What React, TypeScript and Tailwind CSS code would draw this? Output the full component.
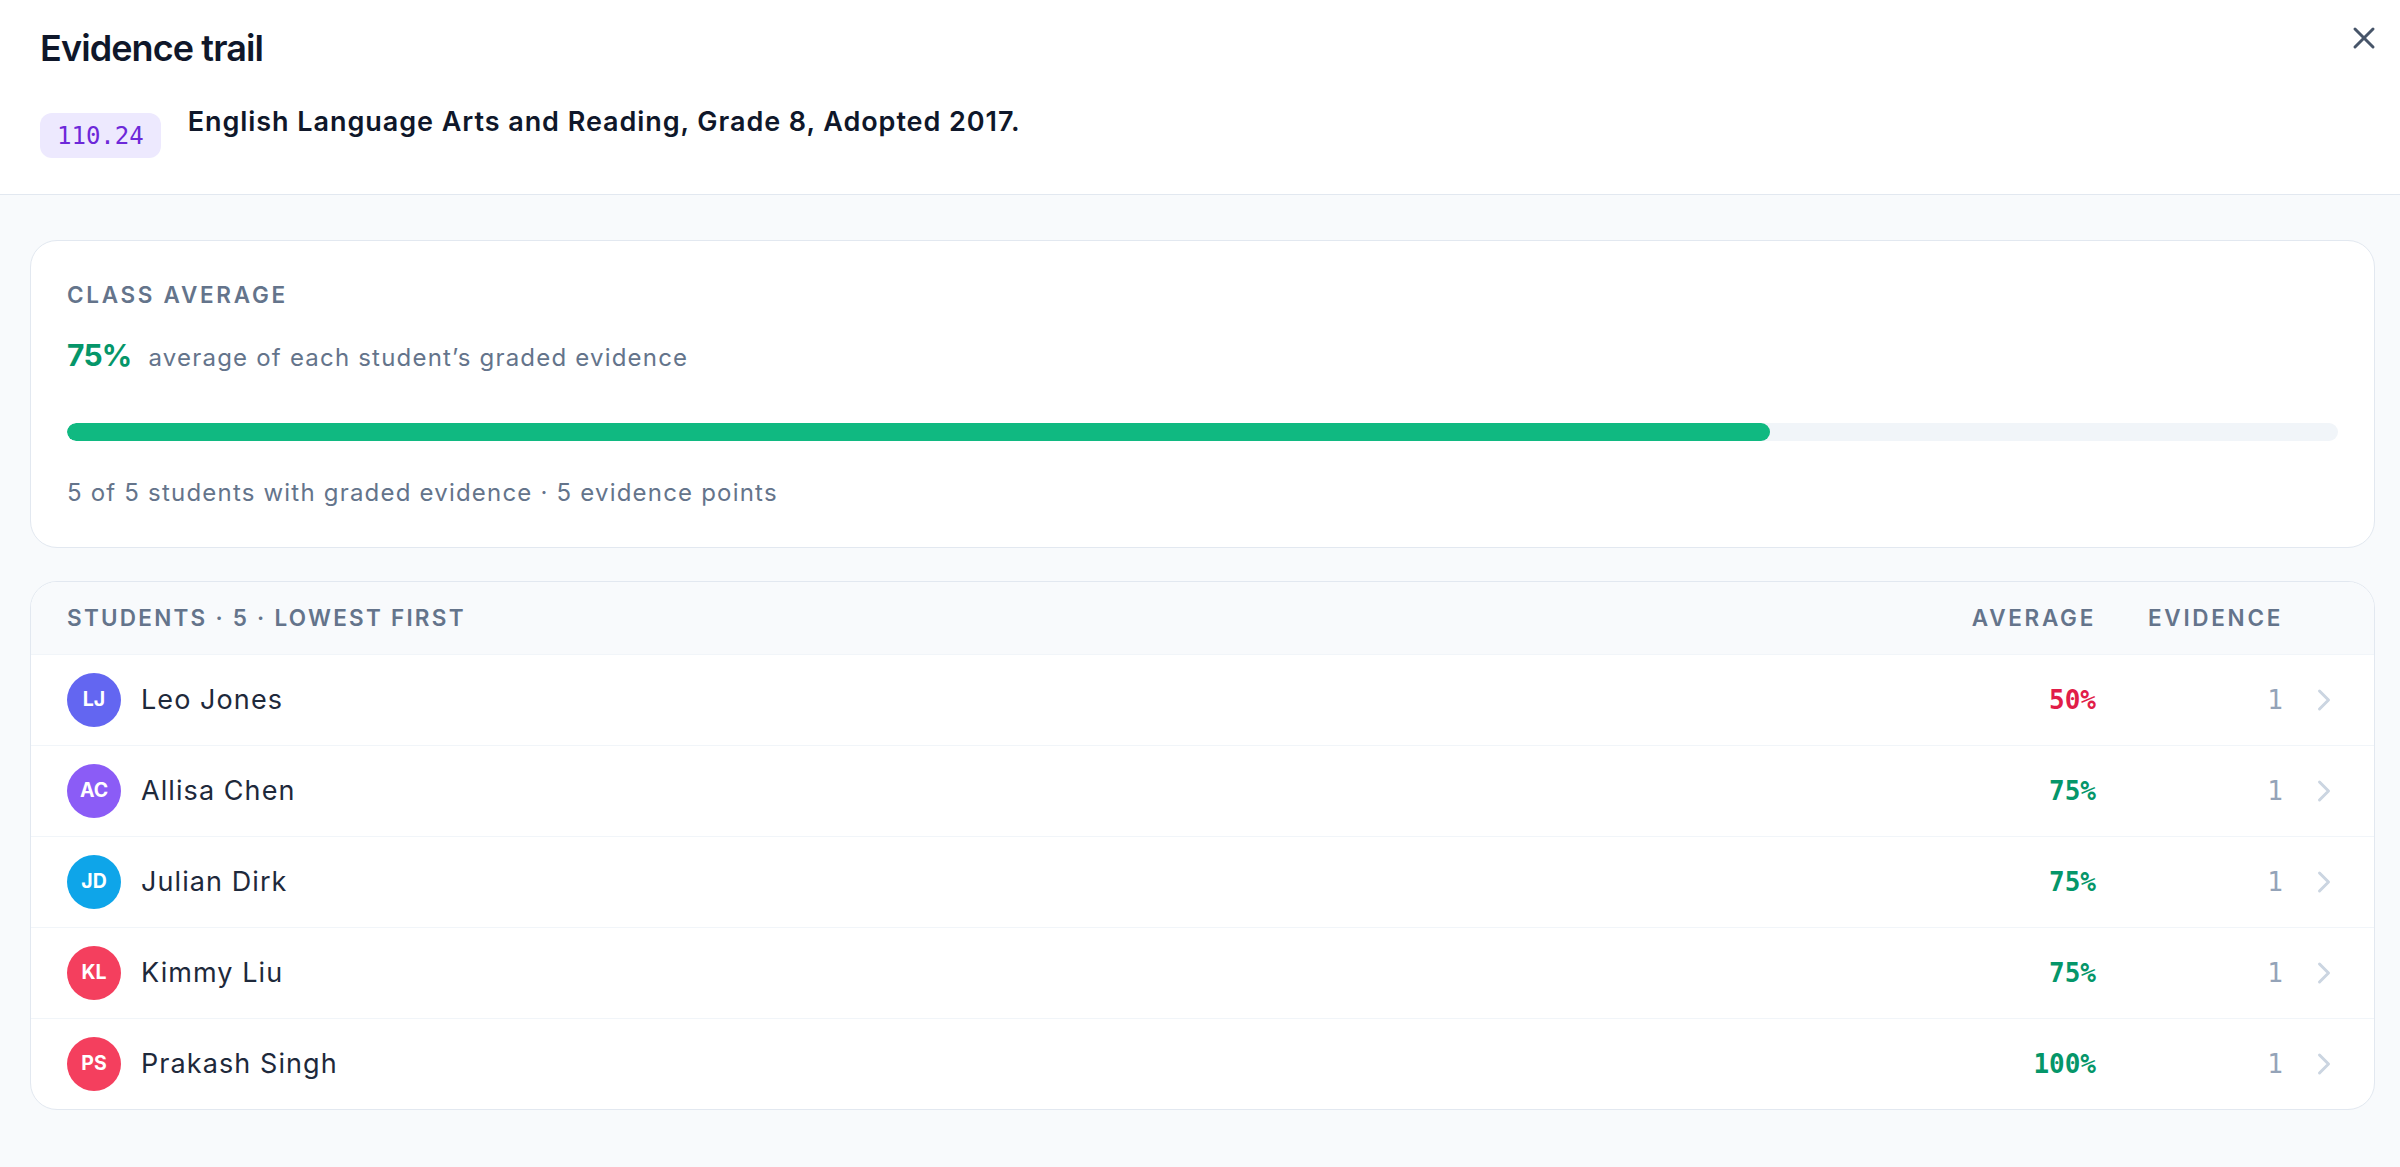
import { X, ChevronRight } from "lucide-react";

type Student = {
  initials: string;
  name: string;
  average: number;
  evidence: number;
  color: string;
};

const students: Student[] = [
  { initials: "LJ", name: "Leo Jones", average: 50, evidence: 1, color: "bg-[#6366f1]" },
  { initials: "AC", name: "Allisa Chen", average: 75, evidence: 1, color: "bg-[#8b5cf6]" },
  { initials: "JD", name: "Julian Dirk", average: 75, evidence: 1, color: "bg-[#0ea5e9]" },
  { initials: "KL", name: "Kimmy Liu", average: 75, evidence: 1, color: "bg-[#f43f5e]" },
  { initials: "PS", name: "Prakash Singh", average: 100, evidence: 1, color: "bg-[#f43f5e]" },
];

const classAverage = 75;

const mono = "font-['DejaVu_Sans_Mono','Liberation_Mono',monospace]";
const label = "text-[22.5px] leading-[30px] font-semibold uppercase tracking-[0.12em] text-[#64748b]";

export default function App() {
  return (
    <div className="min-h-screen bg-[#f8fafc] font-['Inter','Noto_Sans',sans-serif] antialiased">
      {/* Header */}
      <div className="relative bg-white border-b border-[#e2e8f0] pl-[40px] pr-[80px] pt-[24px] pb-[36px]">
        <h1 className="text-[36px] leading-[48px] font-semibold tracking-tight text-[#0f172a]">Evidence trail</h1>
        <div className="mt-[34px] flex items-start gap-[27px]">
          <span
            className={`${mono} mt-[7px] h-[45px] px-[17px] flex items-center rounded-[12px] bg-[#ede9fe] text-[#6d28d9] text-[24px]`}
          >
            110.24
          </span>
          <p className="text-[27px] leading-[32px] font-semibold tracking-[0.035em] text-[#0f172a]">
            English Language Arts and Reading, Grade 8, Adopted 2017.
          </p>
        </div>
        <button className="absolute top-[20px] right-[18px] text-[#475569]" title="Close">
          <X size={36} strokeWidth={2} />
        </button>
      </div>

      <div className="pt-[45px] pl-[30px] pr-[25px] pb-[56px] flex flex-col gap-[33px]">
        {/* Class average */}
        <div className="bg-white border border-[#e2e8f0] rounded-[27px] px-[36px] pt-[39px] pb-[36px]">
          <div className={label}>Class average</div>
          <div className="mt-[24px] flex items-baseline gap-[17px]">
            <span className="text-[30px] leading-[42px] font-bold tracking-tight text-[#059669]">{classAverage}%</span>
            <span className="text-[24px] leading-[36px] tracking-[0.05em] text-[#64748b]">
              average of each student’s graded evidence
            </span>
          </div>
          <div className="mt-[47px] h-[18px] rounded-full bg-[#f1f5f9] overflow-hidden">
            <div className="h-full rounded-full bg-[#10b981]" style={{ width: `${classAverage}%` }} />
          </div>
          <div className="mt-[34px] text-[24px] leading-[36px] tracking-[0.05em] text-[#64748b]">
            5 of 5 students with graded evidence · 5 evidence points
          </div>
        </div>

        {/* Students table */}
        <div className="bg-white border border-[#e2e8f0] rounded-[27px] overflow-hidden">
          <div className={`flex items-center bg-[#f8fafc] pl-[36px] pr-[32px] py-[21px] ${label}`}>
            <div className="flex-1 tracking-[0.1em]">Students · 5 · Lowest first</div>
            <div className="w-[140px] text-right">Average</div>
            <div className="w-[187px] text-right">Evidence</div>
            <div className="w-[59px]" />
          </div>
          <div className="divide-y divide-[#f1f5f9] border-t border-[#f1f5f9]">
            {students.map((s) => (
              <div key={s.initials} className="flex items-center pl-[36px] pr-[32px] py-[18px]">
                <div className="flex-1 flex items-center gap-[20px]">
                  <div
                    className={`${s.color} w-[54px] h-[54px] rounded-full flex items-center justify-center text-white text-[19.5px] font-bold`}
                  >
                    {s.initials}
                  </div>
                  <span className="text-[27px] leading-[42px] tracking-[0.04em] text-[#1e293b]">{s.name}</span>
                </div>
                <div
                  className={`${mono} w-[140px] text-right text-[26px] font-bold ${
                    s.average < 60 ? "text-[#e11d48]" : "text-[#059669]"
                  }`}
                >
                  {s.average}%
                </div>
                <div className={`${mono} w-[187px] text-right text-[26px] text-[#94a3b8]`}>{s.evidence}</div>
                <div className="w-[59px] flex justify-end text-[#cbd5e1]">
                  <ChevronRight size={36} strokeWidth={2} />
                </div>
              </div>
            ))}
          </div>
        </div>
      </div>
    </div>
  );
}
